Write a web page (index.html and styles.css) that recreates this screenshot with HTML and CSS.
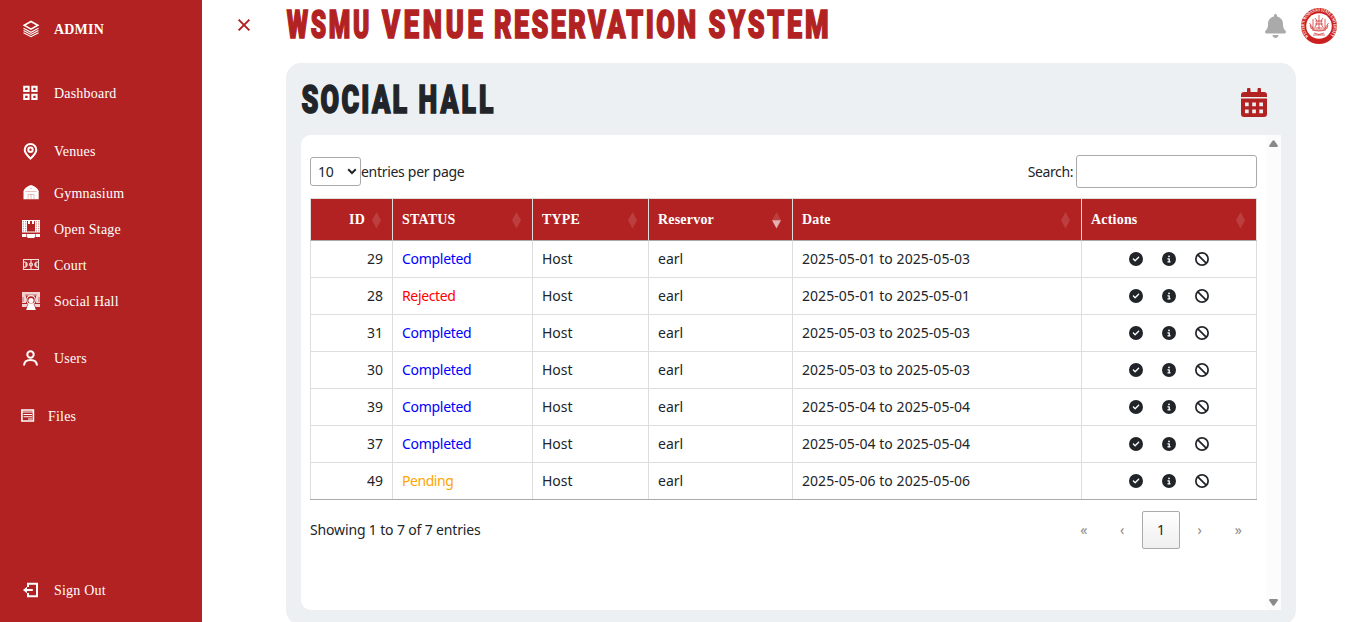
FILE: index.html
```html
<!DOCTYPE html>
<html lang="en">
<head>
<meta charset="utf-8">
<title>WSMU Venue Reservation System</title>
<link rel="stylesheet" href="styles.css">
</head>
<body>
<svg class="defs" aria-hidden="true">
  <symbol id="check" viewBox="0 0 512 512"><path d="M256 512A256 256 0 1 0 256 0a256 256 0 1 0 0 512zM369 209L241 337c-9.4 9.4-24.6 9.4-33.9 0l-64-64c-9.4-9.4-9.4-24.6 0-33.9s24.6-9.4 33.9 0l47 47L335 175c9.4-9.4 24.6-9.4 33.9 0s9.4 24.6 0 33.9z"/></symbol>
  <symbol id="info" viewBox="0 0 512 512"><path d="M256 512A256 256 0 1 0 256 0a256 256 0 1 0 0 512zM216 336h24V272H216c-13.3 0-24-10.7-24-24s10.7-24 24-24h48c13.3 0 24 10.7 24 24v88h8c13.3 0 24 10.7 24 24s-10.7 24-24 24H216c-13.3 0-24-10.7-24-24s10.7-24 24-24zm40-208a32 32 0 1 1 0 64 32 32 0 1 1 0-64z"/></symbol>
  <symbol id="ban" viewBox="0 0 512 512"><path d="M367.2 412.5L99.5 144.8C77.1 176.1 64 214.5 64 256c0 106 86 192 192 192c41.5 0 79.9-13.1 111.2-35.5zm45.3-45.3C434.9 335.9 448 297.5 448 256c0-106-86-192-192-192c-41.5 0-79.9 13.1-111.2 35.5L412.5 367.2zM0 256a256 256 0 1 1 512 0A256 256 0 1 1 0 256z"/></symbol>
  <symbol id="sort" viewBox="0 0 9 17"><path class="up" d="M4.500 0L9 8.200H0z"/><path class="down" d="M0 8.200H9L4.500 16.500z"/></symbol>
</svg>
<div class="app">
  <nav class="sidebar">
    <a class="item brand"><svg class="ico" viewBox="0 0 18 18"><path class="ln mid" d="M9 1.500L15.800 5.300L9 9.100L2.200 5.300z"/><path class="ln thin" d="M1.500 8.300L9 12.300l7.500-4M1.500 10.500L9 14.500l7.500-4M1.500 12.700L9 16.700l7.500-4"/></svg><b>ADMIN</b></a>
    <a class="item dash"><svg class="ico" viewBox="0 0 18 18"><path class="ln" d="M2.200 2.700h4.400v4.200H2.200zM10.300 2.700h4.300v4.200h-4.300zM2.200 10.700h4.400v4.200H2.200zM10.300 10.700h4.300v4.200h-4.300z"/></svg><span>Dashboard</span></a>
    <a class="item"><svg class="ico" viewBox="0 0 18 18"><path class="ln" d="M8.500 16.600C5 13.200 2.700 10.900 2.700 7.900a5.800 5.800 0 0 1 11.600 0c0 3-2.300 5.300-5.800 8.700z"/><circle class="ln" cx="8.500" cy="7.700" r="2.200"/></svg><span>Venues</span></a>
    <div class="sub">
      <a class="item"><svg class="ico" viewBox="0 0 18 18"><path class="fill" d="M1.500 15.200V7Q3 2.800 9 1Q15 2.800 16.700 7v8.200z"/><path class="cut" d="M3.500 7.500h11M6 15v-4.500h6V15M9 10.500V15M8 4.300h2" opacity=".5"/></svg><span>Gymnasium</span></a>
      <a class="item"><svg class="ico" viewBox="0 0 18 18"><path class="fill" d="M0 0h18v1H0zM0 0h5v12.500H0zM13 0h5v12.500h-5zM6 1h2v3H6zM10 1h2v3h-2zM4 11.500h10v1H4zM0 14h18v3H0zM5.500 14h7v4h-7z"/><path class="cut" d="M1.300 1v11M3.700 1v11M14.300 1v11M16.700 1v11" stroke-dasharray="1.300 1"/><path class="cut" d="M4.500 14v4M13.500 14v4"/></svg><span>Open Stage</span></a>
      <a class="item"><svg class="ico pale" viewBox="0 0 18 18"><path class="ln thin" d="M1.500 3.500h15v10h-15zM9 3.500v10M1.500 5.800c5 0 5 5.600 0 5.600M16.500 5.800c-5 0-5 5.600 0 5.600M4 6v5M14 6v5"/><circle class="ln thin" cx="9" cy="8.500" r="1.500"/></svg><span>Court</span></a>
      <a class="item"><svg class="ico" viewBox="0 0 18 18"><path class="fill" d="M0 0h18v4H0zM0 4h4v7H0zM14 4h4v7h-4zM0 12h18v3H0z" opacity=".8"/><path class="cut" d="M3 3h12M5 3v8M13 3v8M0 11.500h5M13 11.500h5M1 5v5M17 5v5"/><circle class="ln thin" cx="9" cy="8" r="4.300"/><circle class="fill" cx="9" cy="8.500" r="2.600"/><path class="fill" d="M6.500 11.500h5L14 18H4z"/><path class="cut" d="M6 12L3.500 18M12 12l2.500 6"/></svg><span>Social Hall</span></a>
    </div>
    <a class="item users"><svg class="ico" viewBox="0 0 18 18"><circle class="ln" cx="8.500" cy="5.500" r="3.200"/><path class="ln" d="M2 16.500c.3-4 2.600-5.400 6.500-5.400s6.200 1.400 6.500 5.400"/></svg><span>Users</span></a>
    <a class="item files"><svg class="ico" viewBox="0 0 18 18"><path class="ln mid" d="M2.900 3h11.500v11H2.900z"/><path class="ln thin" d="M3 5h11.500M4.500 7.500h8.500M4.500 9.700h8.500M9 12H13"/></svg><span>Files</span></a>
    <a class="item out"><svg class="ico" viewBox="0 0 18 18"><path class="ln" d="M6 6V2.800h9v12.400H6V12"/><path class="ln" d="M3 9h7.800"/><path class="fill" d="M1 9l4-3.300v6.600z"/></svg><span>Sign Out</span></a>
  </nav>
  <main class="main">
    <header class="top">
      <svg class="close" viewBox="0 0 14 14"><path d="M1.600 1.600l10.800 10.800M12.400 1.600L1.600 12.400"/></svg>
      <h1><svg class="title" viewBox="0 0 560 50"><g class="display">
        <text transform="translate(.8 38.400) scale(.63 1)" textLength="131" lengthAdjust="spacing">WSMU</text>
        <text transform="translate(96 38.400) scale(.7 1)" textLength="144" lengthAdjust="spacing">VENUE</text>
        <text transform="translate(208 38.400) scale(.69 1)" textLength="293" lengthAdjust="spacing">RESERVATION</text>
        <text transform="translate(422.500 38.400) scale(.69 1)" textLength="174" lengthAdjust="spacing">SYSTEM</text></g></svg></h1>
      <svg class="bell" viewBox="0 0 448 512"><path d="M224 0c-17.7 0-32 14.3-32 32V51.2C119 66 64 130.6 64 208v18.8c0 47-17.3 92.4-48.5 127.6l-7.400 8.300c-8.400 9.400-10.400 22.900-5.300 34.400S19.400 416 32 416H416c12.600 0 24-7.400 29.200-18.900s3.100-25-5.300-34.400l-7.400-8.300C401.300 319.200 384 273.900 384 226.800V208c0-77.400-55-142-128-156.800V32c0-17.700-14.300-32-32-32zm45.300 493.300c12-12 18.700-28.300 18.700-45.300H224 160c0 17 6.700 33.300 18.700 45.300s28.300 18.700 45.300 18.700s33.300-6.700 45.300-18.700z"/></svg>
      <svg class="seal" viewBox="0 0 36 36"><defs><path id="arc" d="M7.700 28.300A14.600 14.600 0 1 1 28.300 28.300"/></defs>
        <circle cx="18" cy="18" r="18" fill="#cb1f20"/><circle cx="18" cy="18" r="12.800" fill="#fff"/>
        <text class="sealtext"><textPath href="#arc" textLength="67" lengthAdjust="spacingAndGlyphs">WESTERN MINDANAO STATE UNIVERSITY</textPath></text>
        <path class="sealink" d="M10 31.600q8 3 16 0" stroke="#fff" stroke-dasharray="1.500 .6"/>
        <path class="sealink" d="M18 7v14M12 11v8M24 11v8M14 10q4 4 0 9M22 10q-4 4 0 9M9 17q1 6 9 6t9-6M9.500 20h17M11 22h14M8.500 15l4 6M27.500 15l-4 6M13 25q5 3 10 0M12 27h12M14.500 13h7M14 16h8"/></svg>
    </header>
    <section class="panel">
      <div class="panelhead">
        <h2><svg class="hall" viewBox="0 0 220 50"><g class="display"><text transform="translate(.5 39.500) scale(.69 1)" textLength="153" lengthAdjust="spacing">SOCIAL</text><text transform="translate(117.500 39.500) scale(.68 1)" textLength="110" lengthAdjust="spacing">HALL</text></g></svg></h2>
        <svg class="cal" viewBox="0 0 26 30"><path fill-rule="evenodd" d="M6 1.500a1.700 1.700 0 0 1 3.500 0V4h7V1.500a1.700 1.700 0 0 1 3.500 0V4h3a3 3 0 0 1 3 3v2H0V7a3 3 0 0 1 3-3h3zM0 10.500h26v15.500a3 3 0 0 1-3 3H3a3 3 0 0 1-3-3zM4 14.500v3.800h3.700v-3.800zM11.200 14.500v3.800h3.700v-3.800zM18.300 14.500v3.800H22v-3.800zM4 21.500v3.800h3.700v-3.800zM11.200 21.500v3.800h3.700v-3.800zM18.300 21.500v3.800H22v-3.800z"/></svg>
      </div>
      <div class="card">
        <div class="content">
          <div class="tools">
            <label class="len"><span class="select">10<svg viewBox="0 0 10 7"><path d="M1.200 1.300L5 5l3.800-3.700"/></svg></span>entries per page</label>
            <label class="search">Search:<input type="text"></label>
          </div>
          <table>
            <colgroup><col class="c1"><col class="c2"><col class="c3"><col class="c4"><col class="c5"><col class="c6"></colgroup>
            <thead><tr>
              <th class="num"><div><span>ID</span><svg class="sort"><use href="#sort"/></svg></div></th>
              <th><div><span>STATUS</span><svg class="sort"><use href="#sort"/></svg></div></th>
              <th><div><span>TYPE</span><svg class="sort"><use href="#sort"/></svg></div></th>
              <th><div><span>Reservor</span><svg class="sort desc"><use href="#sort"/></svg></div></th>
              <th><div><span>Date</span><svg class="sort"><use href="#sort"/></svg></div></th>
              <th><div><span>Actions</span><svg class="sort"><use href="#sort"/></svg></div></th>
            </tr></thead>
            <tbody>
              <tr><td class="num">29</td><td class="completed">Completed</td><td>Host</td><td>earl</td><td class="date">2025-05-01 to 2025-05-03</td><td><div class="acts"><svg><use href="#check"/></svg><svg><use href="#info"/></svg><svg><use href="#ban"/></svg></div></td></tr>
              <tr><td class="num">28</td><td class="rejected">Rejected</td><td>Host</td><td>earl</td><td class="date">2025-05-01 to 2025-05-01</td><td><div class="acts"><svg><use href="#check"/></svg><svg><use href="#info"/></svg><svg><use href="#ban"/></svg></div></td></tr>
              <tr><td class="num">31</td><td class="completed">Completed</td><td>Host</td><td>earl</td><td class="date">2025-05-03 to 2025-05-03</td><td><div class="acts"><svg><use href="#check"/></svg><svg><use href="#info"/></svg><svg><use href="#ban"/></svg></div></td></tr>
              <tr><td class="num">30</td><td class="completed">Completed</td><td>Host</td><td>earl</td><td class="date">2025-05-03 to 2025-05-03</td><td><div class="acts"><svg><use href="#check"/></svg><svg><use href="#info"/></svg><svg><use href="#ban"/></svg></div></td></tr>
              <tr><td class="num">39</td><td class="completed">Completed</td><td>Host</td><td>earl</td><td class="date">2025-05-04 to 2025-05-04</td><td><div class="acts"><svg><use href="#check"/></svg><svg><use href="#info"/></svg><svg><use href="#ban"/></svg></div></td></tr>
              <tr><td class="num">37</td><td class="completed">Completed</td><td>Host</td><td>earl</td><td class="date">2025-05-04 to 2025-05-04</td><td><div class="acts"><svg><use href="#check"/></svg><svg><use href="#info"/></svg><svg><use href="#ban"/></svg></div></td></tr>
              <tr><td class="num">49</td><td class="pending">Pending</td><td>Host</td><td>earl</td><td class="date">2025-05-06 to 2025-05-06</td><td><div class="acts"><svg><use href="#check"/></svg><svg><use href="#info"/></svg><svg><use href="#ban"/></svg></div></td></tr>
            </tbody>
          </table>
          <div class="foot">
            <span>Showing 1 to 7 of 7 entries</span>
            <div class="pages"><span>«</span><span>‹</span><span class="current">1</span><span>›</span><span>»</span></div>
          </div>
        </div>
        <div class="scroll"><svg viewBox="0 0 9 7"><path d="M3.500.8Q4.500-.4 5.500.8L8.800 5.500Q9 7 8 7H1Q0 7 .2 5.500z"/></svg><svg class="flip" viewBox="0 0 9 7"><path d="M3.500.8Q4.500-.4 5.500.8L8.800 5.500Q9 7 8 7H1Q0 7 .2 5.500z"/></svg></div>
      </div>
    </section>
  </main>
</div>
</body>
</html>
```
FILE: styles.css
```css
* { box-sizing: border-box; }
html, body { margin: 0; height: 622px; overflow: hidden; background: #fff; }
body { font: 14px/20px "Noto Sans", sans-serif; color: #212529; }
svg { display: block; flex: none; }
.defs { position: absolute; width: 0; height: 0; }
.app { display: flex; height: 622px; }

.sidebar { flex: none; width: 202px; padding-bottom: 3px; background: #b22222; color: #fff; display: flex; flex-direction: column; font: 14px/20px "Liberation Serif", serif; letter-spacing: .2px; }
.item { flex: none; display: flex; align-items: center; gap: 14px; height: 58px; padding-left: 22px; }
.item .ico { width: 18px; height: 18px; }
.item span, .item b { padding-top: 2px; }
.dash { margin-top: 6px; }
.sub { margin-top: -5px; }
.sub .item { height: 36px; }
.users { margin-top: 10px; }
.files { padding-left: 19px; gap: 11px; }
.out { margin-top: auto; }
.ln { fill: none; stroke: #fff; stroke-width: 2; }
.mid { stroke-width: 1.6; }
.thin { stroke-width: 1.1; }
.fill { fill: #fff; }
.cut { fill: none; stroke: #b22222; stroke-width: .8; stroke-opacity: .75; }
.pale { opacity: .85; }

.main { flex: 1; min-width: 0; }
.top { height: 63px; display: flex; align-items: flex-start; }
.close { width: 14px; height: 14px; margin: 18px 35px 0; fill: none; stroke: #b22222; stroke-width: 2; }
h1, h2 { margin: 0; }
.title { width: 560px; height: 50px; fill: #b22222; stroke: #b22222; }
.display { font: 900 39px Roboto, sans-serif; stroke-width: 1.7; }
.bell { width: 21px; height: 24px; margin: 14px 15px 0 419px; fill: #aaa; }
.seal { width: 36px; height: 36px; margin-top: 8px; }
.sealtext { font: bold 5px "Liberation Serif", serif; fill: #fff; }
.sealink { fill: none; stroke: #cb1f20; stroke-width: .7; }

.panel { width: 1010px; height: 562px; margin-left: 84px; padding: 0 15px 15px; background: #ecf0f3; border-radius: 15px; display: flex; flex-direction: column; }
.panelhead { height: 72px; display: flex; justify-content: space-between; }
.hall { width: 220px; height: 50px; margin-top: 10px; fill: #212529; stroke: #212529; }
.cal { width: 26px; height: 30px; margin: 25px 14px 0 0; fill: #b22222; }
.card { flex: none; height: 475px; background: #fff; border-radius: 10px 0 0 10px; overflow: hidden; display: flex; }
.content { width: 965px; padding: 20px 9px 0; }
.scroll { width: 15px; background: #fcfcfc; display: flex; flex-direction: column; justify-content: space-between; align-items: center; padding: 5px 0 4px; }
.scroll svg { width: 9px; height: 7px; fill: #8a8a8a; }
.flip { transform: rotate(180deg); }

.tools { display: flex; justify-content: space-between; height: 43px; }
.len, .search { display: flex; align-items: center; height: 33px; }
.len { letter-spacing: -.3px; }
.search { letter-spacing: -.4px; }
.select { width: 51px; height: 29px; border: 1px solid #aaa; border-radius: 3px; padding: 0 3px 0 7px; display: flex; align-items: center; justify-content: space-between; }
.select svg { width: 10px; height: 7px; fill: none; stroke: #212529; stroke-width: 2; }
.search input { width: 181px; height: 33px; margin-left: 3px; border: 1px solid #aaa; border-radius: 3px; background: #fff; }

table { width: 947px; table-layout: fixed; border-collapse: separate; border-spacing: 0; border-bottom: 1px solid #aaa; }
.c1 { width: 83px; } .c2 { width: 140px; } .c3 { width: 116px; } .c4 { width: 144px; } .c5 { width: 289px; } .c6 { width: 175px; }
th { height: 43px; padding: 0; background: #b22222; color: #fff; border-top: 1px solid #ddd; border-bottom: 1px solid #aaa; border-right: 1px solid #ddd; font: bold 14px/20px "Liberation Serif", serif; letter-spacing: .2px; text-align: left; }
th:first-child, td:first-child { border-left: 1px solid #ddd; }
th div { display: flex; align-items: center; justify-content: space-between; padding: 0 11px 0 9px; }
th.num div { justify-content: flex-end; gap: 7px; }
.sort { width: 9px; height: 17px; fill: #fff; fill-opacity: .13; margin-top: 2px; }
.desc { --down: .65; }
#sort .down { fill-opacity: var(--down, .13); }
td { height: 37px; padding: 0 9px; border-top: 1px solid #ddd; border-right: 1px solid #ddd; }
tbody tr:first-child td { height: 36px; border-top: 0; }
td.num { text-align: right; }
.completed { color: #00f; letter-spacing: -.3px; }
.rejected { color: #f00; letter-spacing: -.35px; }
.pending { color: orange; letter-spacing: -.45px; }
.date { letter-spacing: .05px; }
.acts { display: flex; justify-content: center; gap: 19px; }
.acts svg { width: 14px; height: 14px; fill: #212529; }

.foot { display: flex; justify-content: space-between; align-items: center; height: 60px; }
.foot > span { letter-spacing: -.15px; }
.pages { display: flex; gap: 1px; }
.pages span { width: 37.500px; height: 38px; display: flex; align-items: center; justify-content: center; color: #8a8a8a; }
.pages .current { width: 38px; color: #212529; border: 1px solid #aaa; border-radius: 2px; background: linear-gradient(#fff, #efefef); }
```
